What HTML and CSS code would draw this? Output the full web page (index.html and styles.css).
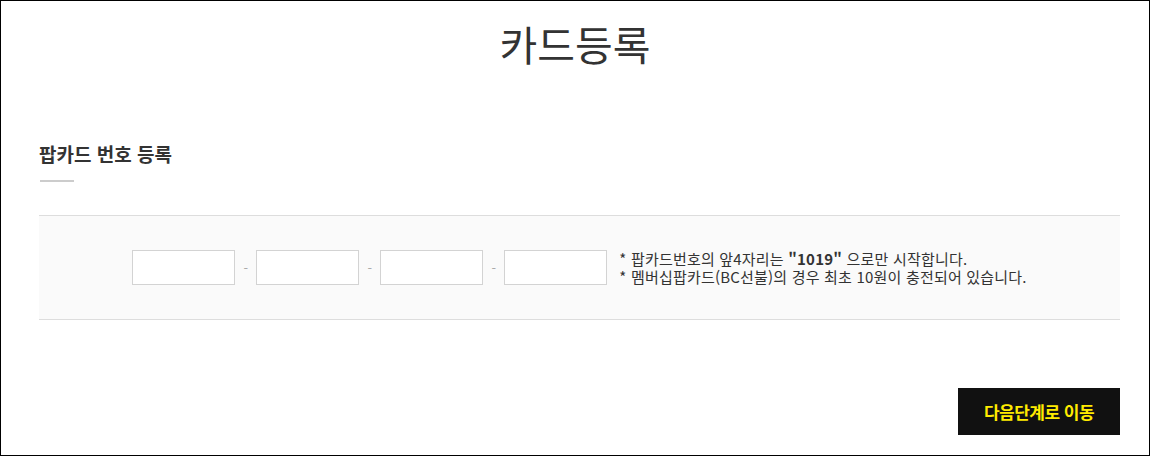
FILE: index.html
```html
<!DOCTYPE html>
<html lang="ko">
<head>
    <meta charset="UTF-8">
    <title>카드등록</title>
    <link rel="stylesheet" href="styles.css">
</head>
<body>
    <div class="page">
        <h1 class="page-title">카드등록</h1>

        <div class="section">
            <h2 class="section-title">팝카드 번호 등록</h2>

            <div class="form-box">
                <div class="card-inputs">
                    <input type="text" class="card-input" maxlength="4">
                    <span class="dash">-</span>
                    <input type="text" class="card-input" maxlength="4">
                    <span class="dash">-</span>
                    <input type="text" class="card-input" maxlength="4">
                    <span class="dash">-</span>
                    <input type="text" class="card-input" maxlength="4">
                </div>
                <ul class="notes">
                    <li>팝카드번호의 앞4자리는 <b>"1019"</b> 으로만 시작합니다.</li>
                    <li>멤버십팝카드(BC선불)의 경우 최초 10원이 충전되어 있습니다.</li>
                </ul>
            </div>

            <div class="actions">
                <button class="next-btn">다음단계로 이동</button>
            </div>
        </div>
    </div>
</body>
</html>
```

FILE: styles.css
```css
* {
    box-sizing: border-box;
}

body {
    margin: 0;
    font-family: "Noto Sans CJK KR", "Noto Sans", sans-serif;
    color: #333;
    background: #fff;
}

.page {
    width: 1150px;
    height: 456px;
    border: 1px solid #000;
    padding-top: 10px;
}

.page-title {
    margin: 0;
    text-align: center;
    font-size: 41px;
    font-weight: 400;
    line-height: 64px;
    color: #333;
}

.section {
    width: 1081px;
    margin: 66px 0 0 38px;
}

.section-title {
    margin: 0;
    font-size: 19px;
    font-weight: 700;
    line-height: 26px;
    color: #333;
}

.section-title::after {
    content: "";
    display: block;
    width: 34px;
    height: 2px;
    margin: 13px 0 0 1px;
    background: #ccc;
}

.form-box {
    margin-top: 33px;
    height: 105px;
    border-top: 1px solid #ddd;
    border-bottom: 1px solid #ddd;
    background: #fafafa;
    display: flex;
    justify-content: center;
    align-items: center;
    gap: 12px;
}

.card-inputs {
    display: flex;
    align-items: center;
}

.card-input {
    width: 103px;
    height: 35px;
    border: 1px solid #d3d3d3;
    background: #fff;
    padding: 0 6px;
    font: inherit;
}

.dash {
    width: 21px;
    text-align: center;
    color: #aaa;
    font-size: 13px;
}

.notes {
    margin: 0;
    padding: 0;
    list-style: none;
    font-size: 15px;
    line-height: 18px;
    color: #333;
    letter-spacing: 0.2px;
}

.notes li::before {
    content: "* ";
}

.notes b {
    font-weight: 700;
}

.actions {
    display: flex;
    justify-content: flex-end;
    margin-top: 68px;
}

.next-btn {
    width: 162px;
    height: 47px;
    border: none;
    background: #111;
    color: #ffeb00;
    font-family: inherit;
    font-size: 17px;
    font-weight: 700;
    letter-spacing: -0.5px;
    cursor: pointer;
}
```
